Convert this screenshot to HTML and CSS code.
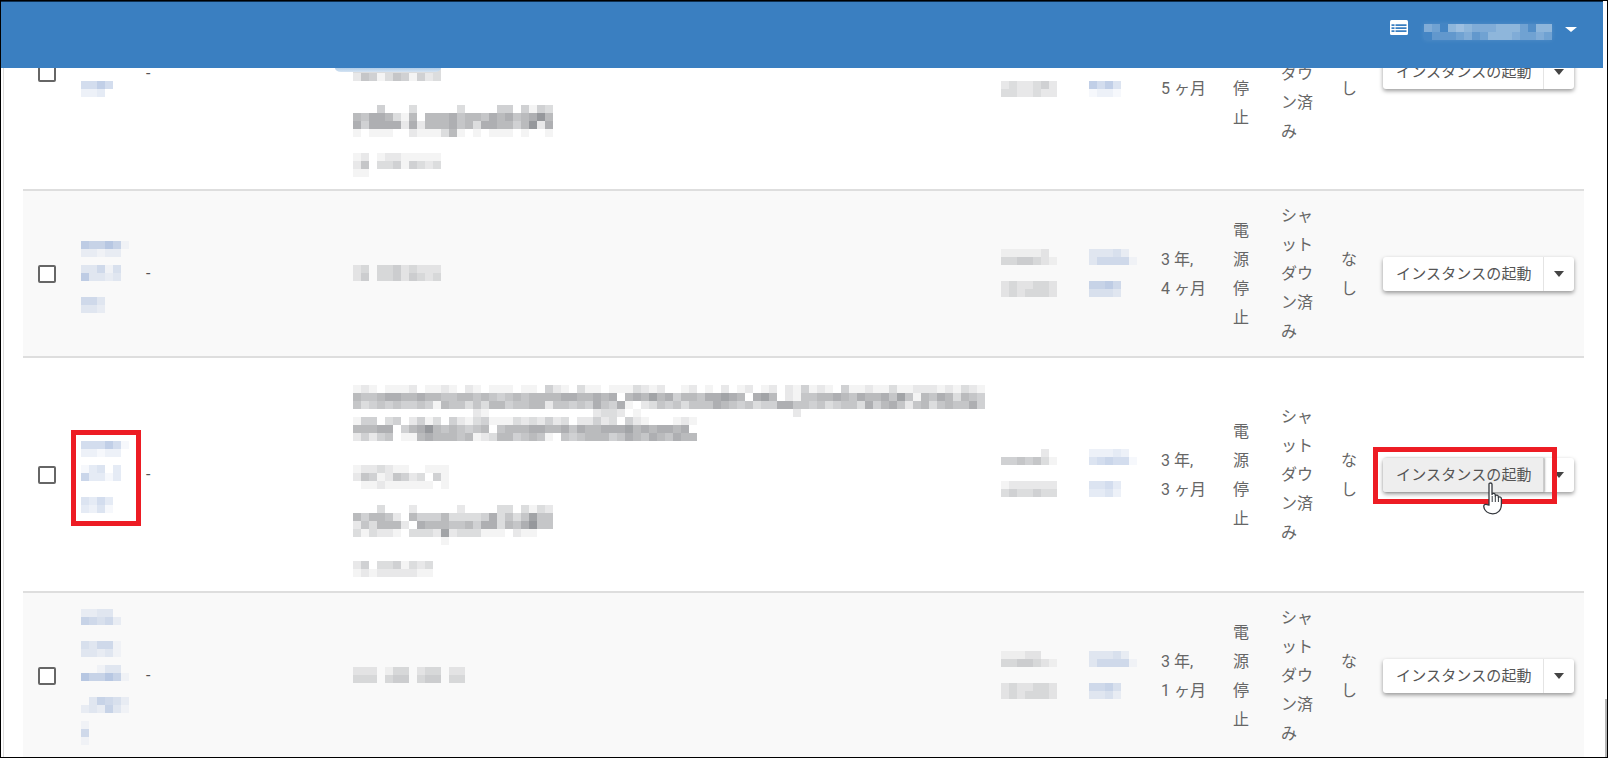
FILE: index.html
```html
<!DOCTYPE html>
<html lang="ja">
<head>
<meta charset="utf-8">
<title>インスタンス</title>
<link rel="stylesheet" href="styles.css">
</head>
<body>
<div class="frame">
  <header class="topbar">
    <svg class="list-icon" width="18" height="15" viewBox="0 0 18 15"><rect x="0" y="0" width="18" height="15" rx="1.5" fill="#fff"/><path d="M1.5 5.2H16.5M1.5 8.2H16.5M1.5 11.2H16.5" stroke="#3a7fc1" stroke-width="1.8" fill="none"/><path d="M5 4V12.5" stroke="#fff" stroke-width="1" fill="none"/></svg>
    <div class="mosaic user-name" data-tone="light" data-rows="4305654445553155 0222342355543343"></div>
    <span class="user-caret"></span>
  </header>

  <div class="smudge"></div>

  <main class="list">
    <section class="row row-plain row-first">
      <div class="cell-check"><span class="checkbox"></span></div>
      <div class="cell-name pad-7"><div class="mosaic" data-tone="blue" data-rows="0 0 0 5575 2230"></div></div>
      <div class="cell-dash">-</div>
      <div class="cell-ip ip-tall ip-first"><div class="mosaic" data-tone="gray" data-rows="0 0 0 0 0 0 0 0 0 0 33333333333 25413541423 0 0 0 0004000300000300004404143 6577631606667566576756796 7477772726667563776646927 1011100211136101011101001 0 0 12012211111 25033414323 11000000000"></div></div>
      <div class="cell-mosaic"><div class="mosaic" data-tone="gray" data-rows="2322343 3322322 0 0 2322342 3322322"></div></div>
      <div class="cell-mosaic"><div class="mosaic" data-tone="blue" data-rows="333420 355551 0 0 7574 1221"></div></div>
      <div class="cell-text"><br>5 ヶ月</div>
      <div class="cell-text">電<br>源<br>停<br>止</div>
      <div class="cell-text">シャ<br>ット<br>ダウ<br>ン済<br>み</div>
      <div class="cell-text">な<br>し</div>
      <div class="cell-action"><div class="split-btn"><button class="btn-main" type="button">インスタンスの起動</button><button class="btn-caret" type="button"><span class="caret"></span></button></div></div>
    </section>

    <section class="row row-alt">
      <div class="cell-check"><span class="checkbox"></span></div>
      <div class="cell-name pad-7"><div class="mosaic" data-tone="blue" data-rows="766861 221220 0 33514 73323 0 0 553 332"></div></div>
      <div class="cell-dash">-</div>
      <div class="cell-ip"><div class="mosaic" data-tone="gray" data-rows="23033423222 24033424323"></div></div>
      <div class="cell-mosaic"><div class="mosaic" data-tone="gray" data-rows="1111120 3344321 0 0 2322332 2323332"></div></div>
      <div class="cell-mosaic"><div class="mosaic" data-tone="blue" data-rows="333420 355551 0 0 6675 4443"></div></div>
      <div class="cell-text">3 年,<br>4 ヶ月</div>
      <div class="cell-text">電<br>源<br>停<br>止</div>
      <div class="cell-text">シャ<br>ット<br>ダウ<br>ン済<br>み</div>
      <div class="cell-text">な<br>し</div>
      <div class="cell-action"><div class="split-btn"><button class="btn-main" type="button">インスタンスの起動</button><button class="btn-caret" type="button"><span class="caret"></span></button></div></div>
    </section>

    <section class="row row-plain row-tall">
      <div class="cell-check"><span class="checkbox"></span></div>
      <div class="cell-name pad-5"><div class="mosaic" data-tone="blue" data-rows="555751 221220 0 13403 63313 0 0 4353 3241"></div></div>
      <div class="cell-dash">-</div>
      <div class="cell-ip ip-tall"><div class="mosaic" data-tone="gray" data-rows="1210111201121021011101104210311011132120012010201201202141210411211311222121321 6556776676655665654565666677667670676867466577876078602155667657667585165763654 5345454454165535366455662554547547102354535557654534477554534553746752563565574 000000000000000210000000000000233201000000000000000000020 1440340241304213411132324230224230421000121 6667704679656545605666776675766777867677670 2424501167666561236645651054566645765765766 0 0 0 122321100111 254125423041 011211111101 0 0 0003000200000200003303132 6466520644463333473535855 2536662076665564773657955 3132210333282333111021100 000000000001 0 0 24033413230 12122222110"></div></div>
      <div class="cell-mosaic"><div class="mosaic" data-tone="gray" data-rows="0000020 4454531 0 0 1222222 3433433"></div></div>
      <div class="cell-mosaic"><div class="mosaic" data-tone="blue" data-rows="222320 456551 0 0 4453 3342"></div></div>
      <div class="cell-text">3 年,<br>3 ヶ月</div>
      <div class="cell-text">電<br>源<br>停<br>止</div>
      <div class="cell-text">シャ<br>ット<br>ダウ<br>ン済<br>み</div>
      <div class="cell-text">な<br>し</div>
      <div class="cell-action"><div class="split-btn is-hover"><button class="btn-main" type="button">インスタンスの起動</button><button class="btn-caret" type="button"><span class="caret"></span></button></div></div>
    </section>

    <section class="row row-alt row-last">
      <div class="cell-check"><span class="checkbox"></span></div>
      <div class="cell-name pad-3"><div class="mosaic" data-tone="blue" data-rows="22330 65452 0 0 43551 33231 0 001330 866861 0 0 036542 232631 0 1 5 1"></div></div>
      <div class="cell-dash">-</div>
      <div class="cell-ip"><div class="mosaic" data-tone="gray" data-rows="22201330233022 33303440344033"></div></div>
      <div class="cell-mosaic"><div class="mosaic" data-tone="gray" data-rows="1112200 3344321 0 0 2322332 2323332"></div></div>
      <div class="cell-mosaic"><div class="mosaic" data-tone="blue" data-rows="333420 355551 0 0 5564 3342"></div></div>
      <div class="cell-text">3 年,<br>1 ヶ月</div>
      <div class="cell-text">電<br>源<br>停<br>止</div>
      <div class="cell-text">シャ<br>ット<br>ダウ<br>ン済<br>み</div>
      <div class="cell-text">な<br>し</div>
      <div class="cell-action"><div class="split-btn"><button class="btn-main" type="button">インスタンスの起動</button><button class="btn-caret" type="button"><span class="caret"></span></button></div></div>
    </section>
  </main>

  <div class="mark mark-name"></div>
  <div class="mark mark-button"></div>

  <svg class="hand" width="22" height="33" viewBox="0 0 22 33"><path d="M7 2.2C7 .6 10 .6 10 2.2V12.5C10.5 11 13 11 13.3 12.8V14C14 12.6 16.2 12.8 16.4 14.8V15.6C17.3 14.4 19.3 14.8 19.4 16.8V22.5C19.4 28.5 15.5 31.8 10.8 31.8C6 31.8 2.4 29 1.8 24.6C1.6 23 2.8 22 4.2 22.4L7 23.2Z" fill="#fff" stroke="#33373d" stroke-width="1.3" stroke-linejoin="round"/><path d="M10.2 14V20M13.3 14V20M16.4 15.6V20" stroke="#33373d" stroke-width="1" fill="none"/></svg>

  <div class="scroll-thumb"></div>
</div>
<script src="mosaic.js"></script>
</body>
</html>
```

FILE: styles.css
```css
* {
  box-sizing: border-box;
}

html,
body {
  margin: 0;
  height: 100%;
  overflow: hidden;
  background: #fff;
}

body {
  font-family: Roboto, "Noto Sans CJK JP", sans-serif;
  font-size: 16px;
  color: #666;
}

.frame {
  position: relative;
  width: 1608px;
  height: 758px;
  overflow: hidden;
  border: 1px solid #000;
  background: #fff;
}

.topbar {
  position: absolute;
  top: 0;
  left: 0;
  right: 4px;
  height: 67px;
  z-index: 5;
  display: flex;
  align-items: flex-start;
  background: #3a7fc1;
  border-top: 1px solid #0f2f4f;
  padding: 17px 0 0 1389px;
}

.list-icon {
  flex: none;
  margin-top: 1px;
}

.user-name {
  margin: 5px 0 0 16px;
  background: rgba(255, 255, 255, 0.05);
  box-shadow: 0 0 5px rgba(255, 255, 255, 0.12);
}

.user-caret {
  flex: none;
  width: 0;
  height: 0;
  margin: 8px 0 0 13px;
  border-left: 6px solid transparent;
  border-right: 6px solid transparent;
  border-top: 5.5px solid #fff;
}

.smudge {
  position: absolute;
  left: 334px;
  top: 66px;
  width: 106px;
  height: 5px;
  z-index: 4;
  background: linear-gradient(#a9c8e6, #d5e4f3);
  border-radius: 0 0 6px 6px / 0 0 4px 4px;
}

.list {
  margin: -43px 23px 0 2px;
  padding-left: 19px;
  border-left: 1px solid #dcdcdc;
}

.row {
  display: grid;
  grid-template-columns: 58px 65px 207px 648px 88px 72px 72px 48px 60px 42px 1fr;
  align-items: center;
  border-bottom: 2px solid #dedede;
  background: #fff;
}

.row-alt {
  background: #f9f9f9;
}

.row-last {
  border-bottom: 0;
}

.cell-check {
  padding-left: 15px;
  display: flex;
}

.row-first .cell-check {
  padding-bottom: 2px;
}

.checkbox {
  width: 18px;
  height: 18px;
  border: 2px solid #666;
  border-radius: 2px;
  background: #fff;
}

.cell-dash {
  color: #555;
  line-height: 29px;
}

.pad-3 {
  padding-top: 3px;
}

.pad-5 {
  padding-top: 5px;
}

.pad-7 {
  padding-top: 7px;
}

.cell-ip {
  padding-bottom: 1px;
}

.cell-mosaic {
  padding-bottom: 1px;
}

.row-tall .cell-mosaic {
  padding-bottom: 3px;
}

.ip-tall {
  align-self: start;
  padding-top: 27px;
  padding-bottom: 14px;
}

.ip-first {
  padding-bottom: 12px;
}

.cell-text {
  line-height: 29px;
  padding: 10px 0;
  white-space: nowrap;
}

.cell-action {
  display: flex;
}

.row-first .cell-action {
  padding-bottom: 4px;
}

.split-btn {
  display: flex;
  width: 191px;
  height: 34px;
  border-radius: 3px;
  background: #fff;
  box-shadow: 0 2px 4px rgba(0, 0, 0, 0.4);
}

.btn-main,
.btn-caret {
  border: 0;
  background: transparent;
  padding: 0;
  margin: 0;
  font: inherit;
  color: #555;
}

.btn-main {
  width: 161px;
  padding-left: 13px;
  text-align: left;
  font-size: 15px;
  letter-spacing: 0.15px;
  line-height: 34px;
  border-right: 1px solid #e4e4e4;
  border-radius: 3px 0 0 3px;
}

.btn-caret {
  flex: 1;
  display: flex;
  align-items: center;
  justify-content: center;
}

.is-hover .btn-main {
  background: #eee;
  border-right-color: #ccc;
  box-shadow: 1px 0 2px rgba(0, 0, 0, 0.3);
}

.caret {
  width: 0;
  height: 0;
  border-left: 5.5px solid transparent;
  border-right: 5.5px solid transparent;
  border-top: 6px solid #444;
}

.mosaic {
  display: flex;
  flex-direction: column;
}

.m-row {
  display: flex;
  height: 8px;
}

.m-cell {
  flex: none;
  width: 8px;
  height: 8px;
}

.mark {
  position: absolute;
  z-index: 6;
  border: 5px solid #ed1c24;
}

.mark-name {
  left: 70px;
  top: 429px;
  width: 70px;
  height: 96px;
}

.mark-button {
  left: 1372px;
  top: 446px;
  width: 184px;
  height: 57px;
}

.hand {
  position: absolute;
  z-index: 7;
  left: 1481px;
  top: 481px;
}

.scroll-thumb {
  position: absolute;
  right: 0;
  top: 698px;
  bottom: 0;
  width: 2px;
  background: #b5b5b5;
}
```

FILE: mosaic.js
```js
var TONES = {
  gray: [110, 112, 118],
  blue: [145, 170, 212],
  light: [255, 255, 255]
};

document.querySelectorAll('.mosaic').forEach(function (block) {
  var tone = TONES[block.dataset.tone];
  block.dataset.rows.split(/\s+/).forEach(function (digits) {
    var row = document.createElement('div');
    row.className = 'm-row';
    digits.split('').forEach(function (digit) {
      var cell = document.createElement('span');
      cell.className = 'm-cell';
      var alpha = Number(digit) * 0.08;
      if (alpha > 0) {
        cell.style.background = 'rgba(' + tone.join(',') + ',' + alpha + ')';
      }
      row.appendChild(cell);
    });
    block.appendChild(row);
  });
});
```
